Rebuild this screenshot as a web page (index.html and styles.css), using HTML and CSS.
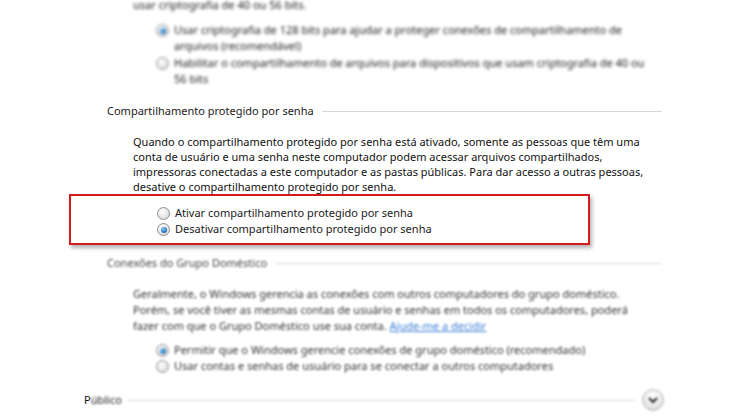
FILE: index.html
```html
<!DOCTYPE html>
<html lang="pt-BR">
<head>
<meta charset="utf-8">
<link rel="stylesheet" href="styles.css">
</head>
<body>
<div class="page">
  <div class="blur top">
    <p class="desc first">usar criptografia de 40 ou 56 bits.</p>
    <div class="opts">
      <div class="opt"><span class="radio on"></span><span>Usar criptografia de 128 bits para ajudar a proteger conexões de compartilhamento de<br>arquivos (recomendável)</span></div>
      <div class="opt"><span class="radio"></span><span>Habilitar o compartilhamento de arquivos para dispositivos que usam criptografia de 40 ou<br>56 bits</span></div>
    </div>
  </div>

  <div class="head h1"><span class="title">Compartilhamento protegido por senha</span><span class="rule"></span></div>
  <p class="desc para1">Quando o compartilhamento protegido por senha está ativado, somente as pessoas que têm uma<br>conta de usuário e uma senha neste computador podem acessar arquivos compartilhados,<br>impressoras conectadas a este computador e as pastas públicas. Para dar acesso a outras pessoas,<br>desative o compartilhamento protegido por senha.</p>

  <div class="highlight">
    <div class="opt"><span class="radio"></span><span>Ativar compartilhamento protegido por senha</span></div>
    <div class="opt"><span class="radio on"></span><span>Desativar compartilhamento protegido por senha</span></div>
  </div>

  <div class="blur bottom">
    <div class="head h2"><span class="title">Conexões do Grupo Doméstico</span><span class="rule"></span></div>
    <p class="desc para2">Geralmente, o Windows gerencia as conexões com outros computadores do grupo doméstico.<br>Porém, se você tiver as mesmas contas de usuário e senhas em todos os computadores, poderá<br>fazer com que o Grupo Doméstico use sua conta. <a class="link" href="#">Ajude-me a decidir</a></p>
    <div class="opts opts2">
      <div class="opt"><span class="radio on"></span><span>Permitir que o Windows gerencie conexões de grupo doméstico (recomendado)</span></div>
      <div class="opt"><span class="radio"></span><span>Usar contas e senhas de usuário para se conectar a outros computadores</span></div>
    </div>
  </div>

  <div class="head h3"><span class="title pub"><span class="crisp">P</span><span class="blur">úblico</span></span><span class="rule blur"></span><span class="chev blur"><svg width="12" height="8" viewBox="0 0 12 8"><path d="M2 2 L6 6 L10 2" fill="none" stroke="#333" stroke-width="2.2"/></svg></span></div>
</div>
</body>
</html>
```
FILE: styles.css
```css
html, body {
  margin: 0;
  padding: 0;
  background: #fff;
}
body {
  font-family: "Noto Sans", "Open Sans", sans-serif;
  font-size: 11px;
  color: #1a1a1a;
  width: 750px;
  height: 417px;
  overflow: hidden;
}
.page {
  display: flex;
  flex-direction: column;
}
.blur {
  filter: blur(1.1px);
}
.top {
  filter: blur(1.4px);
}
.desc {
  margin: 0 0 0 133px;
  line-height: 15px;
  white-space: nowrap;
}
.first {
  margin-top: -3px;
  line-height: 16px;
}
.opts {
  display: flex;
  flex-direction: column;
  gap: 1px;
  margin: 9px 0 0 156px;
}
.opt {
  display: flex;
  align-items: flex-start;
  gap: 5px;
  line-height: 16px;
  white-space: nowrap;
}
.radio {
  flex: none;
  width: 11px;
  height: 11px;
  margin-top: 2px;
  border-radius: 50%;
  border: 1px solid #8f8f8f;
  background: radial-gradient(circle at 40% 35%, #ffffff 0%, #e6e6e6 55%, #cfcfcf 100%);
  position: relative;
  box-sizing: content-box;
}
.radio.on::after {
  content: "";
  position: absolute;
  left: 2.5px;
  top: 2.5px;
  width: 6px;
  height: 6px;
  border-radius: 50%;
  background: radial-gradient(circle at 40% 35%, #8fd0f4 0%, #2a7cc4 55%, #0d4f8f 100%);
}
.head {
  display: flex;
  align-items: center;
  gap: 8px;
  margin-left: 107px;
  width: 555px;
  line-height: 16px;
  white-space: nowrap;
}
.rule {
  flex: 1;
  height: 1px;
  background: #d4d8dc;
}
.h1 {
  margin-top: 16px;
}
.para1 {
  margin-top: 15px;
  color: #111;
}
.highlight {
  box-sizing: border-box;
  margin: 0 0 0 69px;
  width: 521px;
  height: 51px;
  border: 2px solid #d41a1f;
  padding: 9px 0 6px 86px;
  box-shadow: 2px 3px 4px rgba(0, 0, 0, 0.3);
  display: flex;
  flex-direction: column;
}
.h2 {
  margin-top: 10px;
  color: #444;
}
.para2 {
  margin-top: 15px;
  line-height: 16px;
  color: #333;
}
.link {
  color: #3a7fd5;
}
.opts2 {
  margin-top: 8px;
  gap: 0;
  color: #333;
}
.h3 {
  margin: 15px 0 0 84px;
  width: 580px;
  gap: 6px;
}
.pub {
  color: #222;
}
.crisp {
  color: #111;
}
.chev {
  width: 20px;
  height: 20px;
  border-radius: 50%;
  border: 1px solid #b8b8b8;
  background: radial-gradient(circle at 50% 30%, #fff 0%, #e8e8e8 60%, #cfcfcf 100%);
  display: flex;
  align-items: center;
  justify-content: center;
  margin-left: 1px;
}
```
